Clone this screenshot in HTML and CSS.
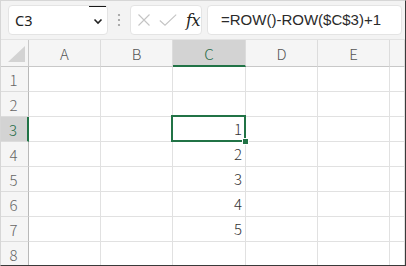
FILE: index.html
```html
<!DOCTYPE html>
<html lang="ja">
<head>
    <meta charset="UTF-8">
    <title>ROW</title>
    <link rel="stylesheet" href="styles.css">
</head>
<body>
    <div class="window">
        <div class="toolbar">
            <div class="name-box">
                <span class="name-text">C3</span>
                <span class="name-drop">
                    <svg width="10" height="8" viewBox="0 0 10 8"><path d="M1.5 2.5 L5 6 L8.5 2.5" fill="none" stroke="#222" stroke-width="1.6"/></svg>
                </span>
            </div>
            <div class="grip">
                <svg width="4" height="14" viewBox="0 0 4 14"><circle cx="2" cy="2" r="1.1" fill="#9a9a9a"/><circle cx="2" cy="7" r="1.1" fill="#9a9a9a"/><circle cx="2" cy="12" r="1.1" fill="#9a9a9a"/></svg>
            </div>
            <div class="func-box">
                <svg class="icon" width="14" height="12" viewBox="0 0 14 12"><path d="M1.5 0.5 L12.5 11.5 M12.5 0.5 L1.5 11.5" stroke="#c4c4c4" stroke-width="1.1" fill="none"/></svg>
                <svg class="icon" width="18" height="12" viewBox="0 0 18 12"><path d="M0.8 6.5 L6 11.2 L17.2 0.6" stroke="#c4c4c4" stroke-width="1.1" fill="none"/></svg>
                <span class="fx">fx</span>
            </div>
            <div class="formula">=ROW()-ROW($C$3)+1</div>
        </div>
        <div class="sheet">
            <div class="corner"><span class="tri"></span></div>
            <div class="col-head">A</div>
            <div class="col-head">B</div>
            <div class="col-head active">C</div>
            <div class="col-head">D</div>
            <div class="col-head">E</div>
            <div class="col-head"></div>

            <div class="row-head">1</div>
            <div class="cell"></div><div class="cell"></div><div class="cell"></div><div class="cell"></div><div class="cell"></div><div class="cell"></div>

            <div class="row-head">2</div>
            <div class="cell"></div><div class="cell"></div><div class="cell"></div><div class="cell"></div><div class="cell"></div><div class="cell"></div>

            <div class="row-head active">3</div>
            <div class="cell"></div><div class="cell"></div><div class="cell num selected">1<span class="handle"></span></div><div class="cell"></div><div class="cell"></div><div class="cell"></div>

            <div class="row-head">4</div>
            <div class="cell"></div><div class="cell"></div><div class="cell num">2</div><div class="cell"></div><div class="cell"></div><div class="cell"></div>

            <div class="row-head">5</div>
            <div class="cell"></div><div class="cell"></div><div class="cell num">3</div><div class="cell"></div><div class="cell"></div><div class="cell"></div>

            <div class="row-head">6</div>
            <div class="cell"></div><div class="cell"></div><div class="cell num">4</div><div class="cell"></div><div class="cell"></div><div class="cell"></div>

            <div class="row-head">7</div>
            <div class="cell"></div><div class="cell"></div><div class="cell num">5</div><div class="cell"></div><div class="cell"></div><div class="cell"></div>

            <div class="row-head">8</div>
            <div class="cell"></div><div class="cell"></div><div class="cell"></div><div class="cell"></div><div class="cell"></div><div class="cell"></div>
        </div>
    </div>
</body>
</html>
```

FILE: styles.css
```css
body {
    margin: 0;
    padding: 0;
    background: #ffffff;
    font-family: 'Noto Sans', 'Noto Sans CJK JP', sans-serif;
    color: #222;
}
.window {
    width: 406px;
    height: 266px;
    box-sizing: border-box;
    border: 1px solid #d6d6d6;
    border-right-color: #3a3a3a;
    border-bottom-color: #3a3a3a;
    background: #ffffff;
    overflow: hidden;
}
.toolbar {
    display: flex;
    align-items: center;
    height: 39px;
    box-sizing: border-box;
    padding: 4px 3px 4px 7px;
    background: #f3f3f3;
    border-bottom: 1px solid #e2e2e2;
}
.name-box {
    display: flex;
    align-items: center;
    justify-content: space-between;
    width: 100px;
    height: 30px;
    box-sizing: border-box;
    background: #ffffff;
    border: 1px solid #e4e4e4;
    border-radius: 4px;
    padding-left: 6px;
}
.name-text {
    font-size: 14.5px;
    color: #222;
}
.name-drop {
    display: flex;
    align-items: center;
    justify-content: center;
    width: 17px;
    height: 28px;
    box-sizing: border-box;
    border-top: 1.5px solid #1a1a1a;
    margin-right: 1px;
}
.grip {
    display: flex;
    align-items: center;
    justify-content: center;
    width: 22px;
}
.func-box {
    display: flex;
    align-items: center;
    width: 72px;
    height: 30px;
    box-sizing: border-box;
    background: #ffffff;
    border: 1px solid #e4e4e4;
    border-radius: 4px;
    padding-left: 6px;
    gap: 8px;
}
.fx {
    font-family: 'DejaVu Serif', 'Liberation Serif', serif;
    font-style: italic;
    font-size: 16px;
    color: #222;
    letter-spacing: -0.5px;
    margin-left: 1px;
}
.formula {
    flex: 1;
    height: 30px;
    margin-left: 5px;
    box-sizing: border-box;
    background: #ffffff;
    border: 1px solid #e4e4e4;
    border-radius: 4px;
    padding-left: 13px;
    font-size: 15px;
    line-height: 28px;
    color: #2a2a2a;
    font-family: 'Liberation Sans', sans-serif;
}
.sheet {
    display: grid;
    grid-template-columns: 28px 72px 72px 73px 72px 72px 1fr;
    grid-template-rows: 27px repeat(8, 25px);
    font-family: 'Noto Sans CJK JP', 'Noto Sans', sans-serif;
    font-weight: 300;
    font-size: 15px;
}
.corner {
    position: relative;
    background: #f5f5f5;
    border-right: 1px solid #c8c8c8;
    border-bottom: 1px solid #c8c8c8;
}
.tri {
    position: absolute;
    right: 3px;
    bottom: 4px;
    width: 0;
    height: 0;
    border-left: 17px solid transparent;
    border-bottom: 16px solid #d3d3d3;
}
.col-head {
    display: flex;
    align-items: center;
    justify-content: center;
    background: #f5f5f5;
    color: #555;
    border-right: 1px solid #dcdcdc;
    border-bottom: 1px solid #c8c8c8;
    padding-top: 1px;
    box-sizing: border-box;
}
.col-head.active {
    background: #d3d3d3;
    color: #1e6b45;
    border-bottom: 2px solid #217346;
}
.row-head {
    display: flex;
    align-items: center;
    justify-content: center;
    background: #f5f5f5;
    color: #666;
    border-right: 1px solid #b8b8b8;
    border-bottom: 1px solid #dcdcdc;
    box-sizing: border-box;
    padding-right: 2px;
}
.row-head.active {
    background: #d3d3d3;
    color: #1e6b45;
    border-right: 2px solid #217346;
}
.cell {
    position: relative;
    border-right: 1px solid #e1e1e1;
    border-bottom: 1px solid #e1e1e1;
    box-sizing: border-box;
}
.num {
    text-align: right;
    padding-right: 3px;
    line-height: 24px;
    color: #333;
}
.selected::after {
    content: '';
    position: absolute;
    left: -2px;
    top: -2px;
    right: -1px;
    bottom: -1px;
    border: 2px solid #217346;
}
.handle {
    position: absolute;
    right: -4px;
    bottom: -4px;
    width: 5px;
    height: 5px;
    background: #217346;
    border: 1px solid #ffffff;
    z-index: 2;
}
```
